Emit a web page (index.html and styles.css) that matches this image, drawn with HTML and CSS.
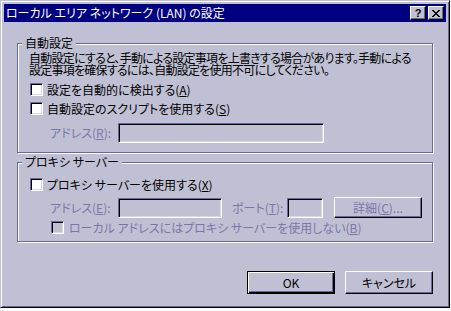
FILE: index.html
```html
<!DOCTYPE html>
<html lang="ja">
  <head>
    <meta charset="UTF-8" />
    <title>ローカル エリア ネットワーク (LAN) の設定</title>
    <link rel="stylesheet" href="styles.css">
  </head>
  <body>
    <div class="window">
      <!-- Title bar -->
      <div class="titlebar">
        <span class="title">ローカル エリア ネットワーク (LAN) の設定</span>
        <div class="caption-buttons">
          <span class="cap-btn help">?</span>
          <span class="cap-btn close">
            <svg width="8" height="7" viewBox="0 0 8 7" shape-rendering="crispEdges">
              <path fill="#000" d="M0 0h2v1H0z M6 0h2v1H6z M1 1h2v1H1z M5 1h2v1H5z M2 2h4v1H2z M3 3h2v1H3z M2 4h4v1H2z M1 5h2v1H1z M5 5h2v1H5z M0 6h2v1H0z M6 6h2v1H6z" />
            </svg>
          </span>
        </div>
      </div>

      <div class="dialog-body">
        <!-- Automatic configuration -->
        <fieldset class="group group-auto">
          <legend>自動設定</legend>
          <p class="note">自動設定にすると、手動による設定事項を上書きする場合があります。手動による<br>設定事項を確保するには、自動設定を使用不可にしてください。</p>
          <label class="check first">
            <span class="box"></span>
            <span>設定を自動的に検出する(<u>A</u>)</span>
          </label>
          <label class="check">
            <span class="box"></span>
            <span>自動設定のスクリプトを使用する(<u>S</u>)</span>
          </label>
          <div class="field-row">
            <span class="field-label disabled">アドレス(<u>R</u>):</span>
            <span class="input input-script"></span>
          </div>
        </fieldset>

        <!-- Proxy server -->
        <fieldset class="group group-proxy">
          <legend>プロキシ サーバー</legend>
          <label class="check first">
            <span class="box"></span>
            <span>プロキシ サーバーを使用する(<u>X</u>)</span>
          </label>
          <div class="field-row proxy-row">
            <span class="field-label disabled">アドレス(<u>E</u>):</span>
            <span class="input input-address"></span>
            <span class="port-label disabled">ポート(<u>T</u>):</span>
            <span class="input input-port"></span>
            <span class="button details disabled">詳細(<u>C</u>)...</span>
          </div>
          <label class="check check-sub">
            <span class="box box-disabled"></span>
            <span class="disabled">ローカル アドレスにはプロキシ サーバーを使用しない(<u>B</u>)</span>
          </label>
        </fieldset>

        <!-- Buttons -->
        <div class="actions">
          <span class="button default">OK</span>
          <span class="button">キャンセル</span>
        </div>
      </div>
    </div>
  </body>
</html>
```

FILE: styles.css
```css
body {
  margin: 0;
  background: #ffffff;
  font-family: "Noto Sans CJK JP", sans-serif;
  font-size: 12px;
  font-feature-settings: "palt";
  color: #000;
}

.window {
  width: 450px;
  height: 308px;
  box-sizing: border-box;
  background: #c0c0d4;
  border: 1px solid;
  border-color: #c0c0d4 #000 #000 #c0c0d4;
  box-shadow: inset 1px 1px 0 #fff, inset -1px -1px 0 #6868a0;
  padding: 3px;
  display: flex;
  flex-direction: column;
}

/* title bar */
.titlebar {
  height: 18px;
  background: #000080;
  color: #fff;
  display: flex;
  align-items: center;
  padding: 0 2px;
}

.title {
  flex: 1;
  line-height: 18px;
  white-space: nowrap;
}

.caption-buttons {
  display: flex;
  gap: 2px;
}

.cap-btn {
  width: 16px;
  height: 14px;
  box-sizing: border-box;
  background: #c0c0d4;
  border: 1px solid;
  border-color: #fff #000 #000 #fff;
  box-shadow: inset -1px -1px 0 #6868a0;
  display: flex;
  align-items: center;
  justify-content: center;
  color: #000;
}

.cap-btn.help {
  font-family: "Liberation Sans", sans-serif;
  font-weight: bold;
  font-size: 11px;
  line-height: 12px;
}

/* body */
.dialog-body {
  flex: 1;
  padding: 14px 13px 0;
  display: flex;
  flex-direction: column;
}

.group {
  margin: 0;
  min-width: 0;
  padding: 2px 10px 9px 11px;
  border: 1px solid #6868a0;
  box-shadow: inset 1px 1px 0 #fff, 1px 1px 0 #fff;
}

.group legend {
  margin-left: -7px;
  padding: 0 3px;
  line-height: 14px;
  background: #c0c0d4;
}

.group-proxy {
  margin-top: 2px;
  padding-top: 1px;
  padding-bottom: 4px;
}

.note {
  margin: 0;
  line-height: 12px;
  letter-spacing: -0.75px;
  white-space: nowrap;
}

.check {
  display: flex;
  align-items: center;
  gap: 4px;
  height: 19px;
  padding-left: 1px;
  white-space: nowrap;
}

.group-auto .check.first {
  margin-top: 4px;
}

.group-proxy .check.first {
  margin-top: 5px;
}

.box {
  width: 13px;
  height: 13px;
  flex: none;
  box-sizing: border-box;
  background: #fff;
  border: 1px solid;
  border-color: #6868a0 #fff #fff #6868a0;
  box-shadow: inset 1px 1px 0 #000, inset -1px -1px 0 #d8d8e4;
}

.box-disabled {
  background: #c0c0d4;
}

.check-sub {
  padding-left: 22px;
  gap: 5px;
}

.disabled {
  color: #7878a8;
}

.field-row {
  display: flex;
  align-items: center;
  height: 21px;
  margin-top: 4px;
  padding-left: 21px;
  white-space: nowrap;
}

.proxy-row {
  margin-top: 3px;
}

.field-label {
  width: 68px;
}

.input {
  height: 20px;
  box-sizing: border-box;
  border: 1px solid;
  border-color: #6868a0 #fff #fff #6868a0;
  box-shadow: inset 1px 1px 0 #000, inset -1px -1px 0 #d8d8e4;
}

.input-script {
  width: 206px;
}

.input-address {
  width: 104px;
}

.port-label {
  margin-left: 10px;
  width: 55px;
}

.input-port {
  width: 36px;
}

.button {
  width: 88px;
  height: 23px;
  box-sizing: border-box;
  display: flex;
  align-items: center;
  justify-content: center;
  background: #c0c0d4;
  border: 1px solid;
  border-color: #fff #000 #000 #fff;
  box-shadow: inset -1px -1px 0 #6868a0;
}

.button.details {
  margin-left: 11px;
  height: 21px;
}

.button.default {
  border-color: #000;
  box-shadow: inset 1px 1px 0 #fff, inset -1px -1px 0 #000, inset -2px -2px 0 #6868a0;
}

.actions {
  display: flex;
  justify-content: flex-end;
  gap: 10px;
  margin-top: 29px;
}
```
